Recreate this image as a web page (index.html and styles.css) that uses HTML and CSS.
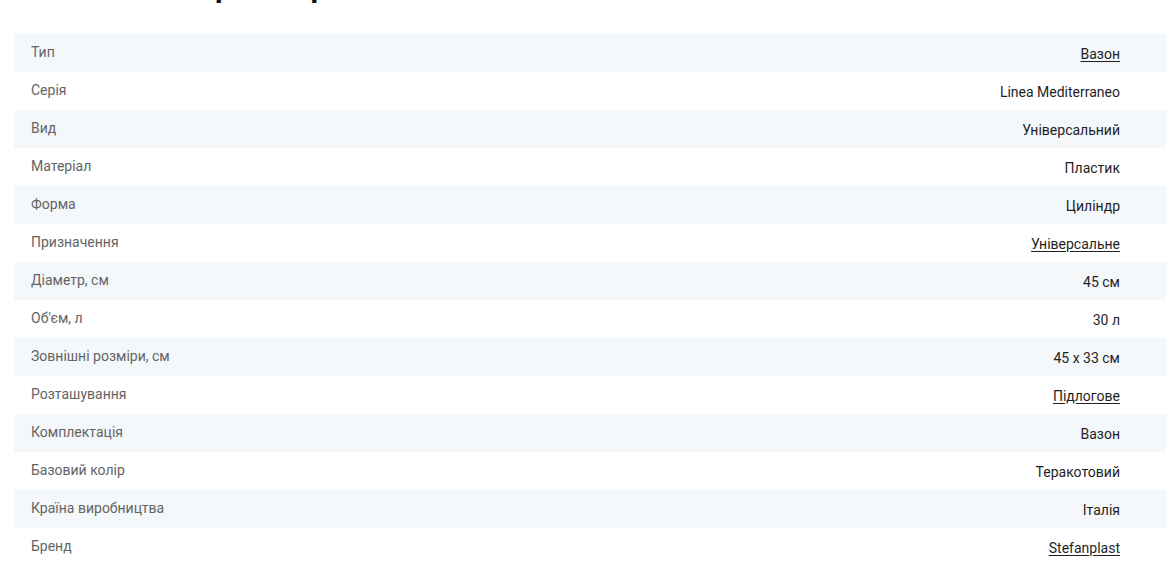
FILE: index.html
```html
<!DOCTYPE html>
<html lang="uk">
<head>
    <meta charset="UTF-8">
    <title>Характеристики</title>
    <link rel="stylesheet" href="styles.css">
</head>
<body>

<div class="specs">
    <h2 class="specs-title">Характеристики</h2>

    <div class="specs-table">
        <div class="spec-row">
            <span class="spec-name">Тип</span>
            <a class="spec-value link" href="#">Вазон</a>
        </div>
        <div class="spec-row">
            <span class="spec-name">Серія</span>
            <span class="spec-value">Linea Mediterraneo</span>
        </div>
        <div class="spec-row">
            <span class="spec-name">Вид</span>
            <span class="spec-value">Універсальний</span>
        </div>
        <div class="spec-row">
            <span class="spec-name">Матеріал</span>
            <span class="spec-value">Пластик</span>
        </div>
        <div class="spec-row">
            <span class="spec-name">Форма</span>
            <span class="spec-value">Циліндр</span>
        </div>
        <div class="spec-row">
            <span class="spec-name">Призначення</span>
            <a class="spec-value link" href="#">Універсальне</a>
        </div>
        <div class="spec-row">
            <span class="spec-name">Діаметр, см</span>
            <span class="spec-value">45 см</span>
        </div>
        <div class="spec-row">
            <span class="spec-name">Об'єм, л</span>
            <span class="spec-value">30 л</span>
        </div>
        <div class="spec-row">
            <span class="spec-name">Зовнішні розміри, см</span>
            <span class="spec-value">45 x 33 см</span>
        </div>
        <div class="spec-row">
            <span class="spec-name">Розташування</span>
            <a class="spec-value link" href="#">Підлогове</a>
        </div>
        <div class="spec-row">
            <span class="spec-name">Комплектація</span>
            <span class="spec-value">Вазон</span>
        </div>
        <div class="spec-row">
            <span class="spec-name">Базовий колір</span>
            <span class="spec-value">Теракотовий</span>
        </div>
        <div class="spec-row">
            <span class="spec-name">Країна виробництва</span>
            <span class="spec-value">Італія</span>
        </div>
        <div class="spec-row">
            <span class="spec-name">Бренд</span>
            <a class="spec-value link" href="#">Stefanplast</a>
        </div>
    </div>
</div>

</body>
</html>
```

FILE: styles.css
```css
body {
    margin: 0;
    padding: 0;
    font-family: Roboto, 'Noto Sans', sans-serif;
    background: #fff;
    overflow: hidden;
}

.specs {
    padding-left: 14px;
}

.specs-title {
    margin: -29px 0 31px 0;
    padding-left: 160px;
    font-size: 30px;
    line-height: 32px;
    font-weight: 700;
    letter-spacing: 3px;
    color: #111;
}

.specs-table {
    display: flex;
    flex-direction: column;
}

.spec-row {
    display: flex;
    justify-content: space-between;
    align-items: center;
    height: 38px;
    padding: 0 46px 0 17px;
    font-size: 14px;
}

.spec-row:nth-child(odd) {
    background-color: #f5f8fb;
}

.spec-name {
    color: #646464;
    margin-top: -2px;
}

.spec-value {
    color: #1f1f1f;
    margin-top: 1px;
}

.spec-value.link {
    text-decoration: underline;
    text-underline-offset: 2px;
}
```
